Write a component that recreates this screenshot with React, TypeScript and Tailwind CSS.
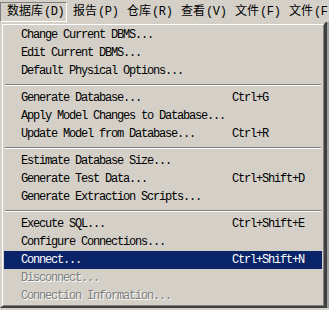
import React from 'react';

type Row =
  | { sep: true }
  | { label: string; key?: string; active?: boolean; disabled?: boolean };

const rows: Row[] = [
  { label: 'Change Current DBMS...' },
  { label: 'Edit Current DBMS...' },
  { label: 'Default Physical Options...' },
  { sep: true },
  { label: 'Generate Database...', key: 'Ctrl+G' },
  { label: 'Apply Model Changes to Database...' },
  { label: 'Update Model from Database...', key: 'Ctrl+R' },
  { sep: true },
  { label: 'Estimate Database Size...' },
  { label: 'Generate Test Data...', key: 'Ctrl+Shift+D' },
  { label: 'Generate Extraction Scripts...' },
  { sep: true },
  { label: 'Execute SQL...', key: 'Ctrl+Shift+E' },
  { label: 'Configure Connections...' },
  { label: 'Connect...', key: 'Ctrl+Shift+N', active: true },
  { label: 'Disconnect...', disabled: true },
  { label: 'Connection Information...', disabled: true },
];

const menus = ['报告', '仓库', '查看', '文件', '文件'];
const keys = ['P', 'R', 'V', 'F', 'F'];

const mono = 'font-["Liberation_Mono","Noto_Sans_CJK_SC",monospace]';

export default function App() {
  return (
    <div className={`w-[329px] h-[310px] overflow-hidden bg-[#d4d0c8] text-black ${mono}`}>
      {/* menu bar */}
      <div className="h-[22px] flex items-stretch pt-[2px] whitespace-nowrap text-[12px]">
        <div className="w-[67px] shrink-0 flex items-center pl-[6px] border border-t-[#808080] border-l-[#808080] border-b-white border-r-white">
          数据库<span className="pl-[1px] tracking-[-0.4px]">(D)</span>
        </div>
        {menus.map((m, i) => (
          <div key={i} className="w-[54px] flex items-center pl-[6px] shrink-0">
            {m}
            <span className="pl-[1px] tracking-[-0.4px]">({keys[i]})</span>
          </div>
        ))}
      </div>

      {/* dropdown */}
      <div className="flex">
        <div className="w-[326px] shrink-0 border-[2px] border-t-[#d4d0c8] border-l-[#d4d0c8] border-r-[#404040] border-b-[#404040] shadow-[inset_1px_1px_0_#fff,inset_-1px_-1px_0_#808080] p-[2px] pb-[1px] text-[12px] tracking-[-1.2px]">
          {rows.map((r, i) =>
            'sep' in r ? (
              <div key={i} className="h-[9px] flex flex-col justify-center px-[1px]">
                <div className="h-px bg-[#808080]" />
                <div className="h-px bg-white" />
              </div>
            ) : (
              <div
                key={i}
                className={`h-[18px] flex items-center pl-[17px] ${
                  r.active ? 'bg-[#0a246a] text-white' : ''
                } ${r.disabled ? 'text-[#808080] [text-shadow:1px_1px_0_#fff]' : ''}`}
              >
                <span className="w-[211px] shrink-0">{r.label}</span>
                {r.key && <span>{r.key}</span>}
              </div>
            )
          )}
        </div>
        <div className="flex-1 border-l border-[#404040] bg-[#a0a0a0]" />
      </div>
    </div>
  );
}
